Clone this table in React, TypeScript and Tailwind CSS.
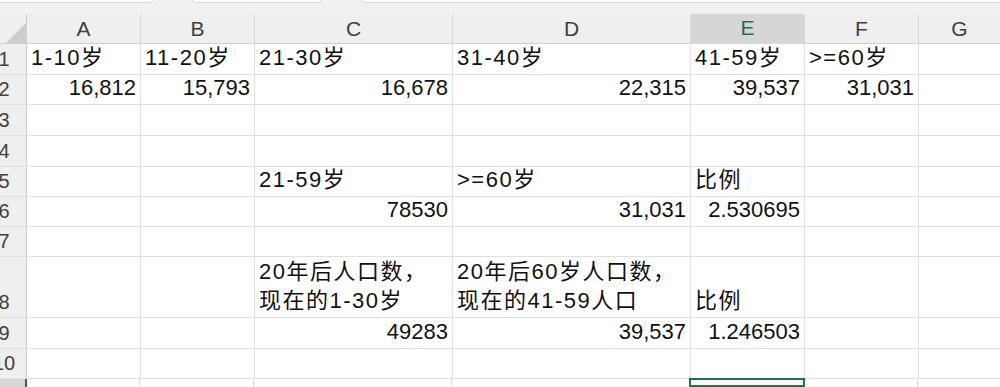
import React from 'react';

type Cell = { text?: React.ReactNode; num?: boolean };

const cols = ['A', 'B', 'C', 'D', 'E', 'F', 'G'];
const colWidths = ['w-[114px]', 'w-[114px]', 'w-[198px]', 'w-[238px]', 'w-[114px]', 'w-[114px]', 'flex-1'];

const rows: { h: string; n: string; cells: Cell[] }[] = [
  { h: 'h-[31px]', n: '1', cells: [{ text: '1-10岁' }, { text: '11-20岁' }, { text: '21-30岁' }, { text: '31-40岁' }, { text: '41-59岁' }, { text: '>=60岁' }] },
  { h: 'h-[30px]', n: '2', cells: [{ text: '16,812', num: true }, { text: '15,793', num: true }, { text: '16,678', num: true }, { text: '22,315', num: true }, { text: '39,537', num: true }, { text: '31,031', num: true }] },
  { h: 'h-[31px]', n: '3', cells: [] },
  { h: 'h-[31px]', n: '4', cells: [] },
  { h: 'h-[30px]', n: '5', cells: [{}, {}, { text: '21-59岁' }, { text: '>=60岁' }, { text: '比例' }] },
  { h: 'h-[30px]', n: '6', cells: [{}, {}, { text: '78530', num: true }, { text: '31,031', num: true }, { text: '2.530695', num: true }] },
  { h: 'h-[30px]', n: '7', cells: [] },
  {
    h: 'h-[61px]',
    n: '8',
    cells: [
      {},
      {},
      { text: <>20年后人口数，<br />现在的1-30岁</> },
      { text: <>20年后60岁人口数，<br />现在的41-59人口</> },
      { text: '比例' },
    ],
  },
  { h: 'h-[31px]', n: '9', cells: [{}, {}, { text: '49283', num: true }, { text: '39,537', num: true }, { text: '1.246503', num: true }] },
  { h: 'h-[30px]', n: '10', cells: [] },
];

const font = "font-['Liberation_Sans','Noto_Sans_CJK_SC',sans-serif]";

export default function App() {
  return (
    <div className={`w-[1000px] h-[387px] overflow-hidden bg-white flex flex-col ${font}`}>
      {/* top strip (bottom edge of formula bar) */}
      <div className="h-[14px] shrink-0 bg-[#f3f1f0] flex items-start gap-[39px]">
        <div className="w-[153px] h-[3px] bg-white border-b border-r border-[#dedad8] rounded-br-[3px]" />
        <div className="w-[130px] h-[3px] bg-white border-b border-x border-[#dedad8] rounded-b-[3px]" />
        <div className="flex-1 h-[3px] bg-white border-b border-l border-[#dedad8] rounded-bl-[3px]" />
      </div>

      {/* column headers */}
      <div className="h-[30px] shrink-0 flex bg-[#efefef] border-b border-[#cfcfcf]">
        <div className="w-[27px] shrink-0 border-r border-[#cfcfcf] flex items-end justify-end">
          <svg width="22" height="22" viewBox="0 0 22 22">
            <polygon points="22,2 22,22 2,22" fill="#cdcdcd" />
          </svg>
        </div>
        {cols.map((c, i) => (
          <div
            key={c}
            className={`${colWidths[i]} shrink-0 flex items-center justify-center text-[21px] ${
              c === 'E'
                ? 'bg-[#d6d6d6] text-[#1e7145] border-b-2 border-[#217346] -mb-px'
                : 'text-[#404040]'
            } ${i < 6 ? 'border-r border-[#d9d9d9]' : ''}`}
          >
            {c}
          </div>
        ))}
      </div>

      {rows.map(r => (
        <div key={r.n} className={`${r.h} shrink-0 flex border-b border-[#e1e1e1]`}>
          <div className="w-[27px] shrink-0 bg-[#efefef] border-r border-[#cfcfcf] overflow-hidden flex items-end pb-[2px]">
            <span className="w-[30px] -ml-[11px] shrink-0 text-center text-[20px] leading-[26px] text-[#404040]">{r.n}</span>
          </div>
          {cols.map((c, i) => {
            const cell = r.cells[i] || {};
            return (
              <div
                key={c}
                className={`${colWidths[i]} shrink-0 flex flex-col justify-end px-[4px] pb-[2px] text-[22px] leading-[29px] text-[#111] whitespace-nowrap ${
                  cell.num ? 'items-end' : 'items-start tracking-[1.5px]'
                } ${i < 6 ? 'border-r border-[#e1e1e1]' : ''}`}
              >
                {cell.text && <span>{cell.text}</span>}
              </div>
            );
          })}
        </div>
      ))}

      {/* row 11, partially visible */}
      <div className="flex-1 flex">
        <div className="w-[27px] shrink-0 bg-[#d6d6d6] border-r-2 border-[#217346]" />
        <div className="w-[113px] shrink-0 border-r border-[#e1e1e1]" />
        <div className="w-[114px] shrink-0 border-r border-[#e1e1e1]" />
        <div className="w-[198px] shrink-0 border-r border-[#e1e1e1]" />
        <div className="w-[237px] shrink-0" />
        <div className="w-[116px] shrink-0 border-2 border-[#217346] -mt-px" />
        <div className="w-[113px] shrink-0 border-r border-[#e1e1e1]" />
        <div className="flex-1" />
      </div>
    </div>
  );
}
